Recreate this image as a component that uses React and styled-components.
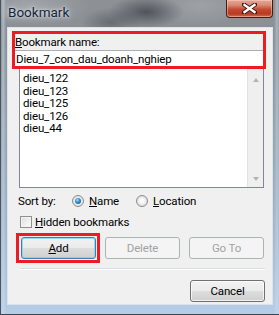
import React from 'react';
import styled, { createGlobalStyle } from 'styled-components';

const Global = createGlobalStyle`
  html, body { margin: 0; padding: 0; background: #868a8e; }
  body { font-family: Roboto, "Open Sans", sans-serif; }
  #root { width: 279px; height: 315px; }
`;

const Window = styled.div`
  width: 279px;
  height: 315px;
  box-sizing: border-box;
  display: flex;
  flex-direction: column;
  overflow: hidden;
  border-left: 1px solid #4a5560;
  border-bottom: 1px solid #3a4550;
  background:
    radial-gradient(ellipse 38px 16px at 145px 12px, rgba(40, 44, 50, 0.6), rgba(40, 44, 50, 0) 100%),
    radial-gradient(ellipse 30px 14px at 110px 22px, rgba(60, 64, 70, 0.45), rgba(60, 64, 70, 0) 100%),
    radial-gradient(ellipse 60px 20px at 30px 6px, rgba(200, 204, 208, 0.35), rgba(200, 204, 208, 0) 100%),
    radial-gradient(ellipse 50px 20px at 200px 6px, rgba(190, 194, 198, 0.35), rgba(190, 194, 198, 0) 100%),
    linear-gradient(90deg, rgba(255, 255, 255, 0) 0px, rgba(210, 225, 240, 0.5) 2px, rgba(255, 255, 255, 0) 5px, rgba(255, 255, 255, 0) 273px, rgba(210, 225, 240, 0.45) 276px, rgba(255, 255, 255, 0) 279px),
    linear-gradient(180deg, #8d9196 0px, #8a9096 40px, #9eb0c2 200px, #b6cde6 100%);
`;

const TitleBar = styled.div`
  height: 27px;
  display: flex;
  justify-content: space-between;
  align-items: flex-start;
  flex-shrink: 0;
`;

const Title = styled.span`
  padding: 4px 0 0 7px;
  font-size: 13.5px;
  line-height: 16px;
  color: #16253a;
  text-shadow: 0 0 6px rgba(235, 240, 245, 0.9), 0 0 3px rgba(235, 240, 245, 0.9);
`;

const CloseButton = styled.div`
  width: 47px;
  height: 18px;
  margin-right: 6px;
  box-sizing: border-box;
  border: 1px solid #4a1a12;
  border-top: none;
  border-radius: 0 0 4px 4px;
  background: linear-gradient(180deg, #e6a797 0%, #d98a74 30%, #c44a31 55%, #b83a22 80%, #d06a4a 100%);
  box-shadow: inset 0 0 0 1px rgba(255, 220, 210, 0.45);
  display: flex;
  align-items: center;
  justify-content: center;
`;

const Client = styled.div`
  margin: 0 6px;
  height: 278px;
  box-sizing: border-box;
  border: 1px solid #dde3ea;
  background: #f0f0f0;
  display: flex;
  flex-direction: column;
  font-size: 11.5px;
  letter-spacing: -0.15px;
  color: #000;
  flex-shrink: 0;
`;

const NameGroup = styled.div`
  margin: 3px 0 0 4px;
  width: 254px;
  height: 38px;
  box-sizing: border-box;
  border: 3px solid #ec1c24;
  display: flex;
  flex-direction: column;
`;

const FieldLabel = styled.div`
  height: 16px;
  line-height: 16px;
  white-space: nowrap;
`;

const TextField = styled.input`
  height: 16px;
  width: 100%;
  box-sizing: border-box;
  margin: 0;
  padding: 0 1px;
  border: none;
  border-top: 1px solid #abadb3;
  background: #fff;
  font: inherit;
  letter-spacing: inherit;
  line-height: 15px;
  color: #000;
  outline: none;
`;

const ListBox = styled.div`
  margin-left: 11px;
  width: 245px;
  height: 119px;
  box-sizing: border-box;
  border: 1px solid #828790;
  border-top: none;
  background: #fff;
  display: flex;
  flex-shrink: 0;
`;

const Items = styled.div`
  flex: 1;
  padding: 3px 0 0 3px;
  line-height: 12.5px;
`;

const Item = styled.div`
  white-space: nowrap;
  height: 12.5px;
`;

const ScrollBar = styled.div`
  width: 16px;
  box-sizing: border-box;
  border-left: 1px solid #e2e2e2;
  background: #efefef;
  display: flex;
  flex-direction: column;
  justify-content: space-between;
  align-items: center;
  padding: 9px 0 6px;
`;

const Arrow = styled.div`
  width: 0;
  height: 0;
  border-left: 3.5px solid transparent;
  border-right: 3.5px solid transparent;
  ${(p) => (p.$up ? 'border-bottom: 4px solid #b4b4b4;' : 'border-top: 4px solid #b4b4b4;')}
`;

const SortRow = styled.div`
  margin: 5px 0 0 10px;
  height: 16px;
  display: flex;
  align-items: center;
`;

const SortLabel = styled.span`
  width: 54px;
`;

const RadioOption = styled.label`
  display: flex;
  align-items: center;
  gap: 5px;
  width: ${(p) => p.$w || 'auto'};
`;

const RadioCircle = styled.span`
  width: 12px;
  height: 12px;
  box-sizing: border-box;
  border-radius: 50%;
  border: 1px solid #8a8c8e;
  background: radial-gradient(circle at 50% 50%, #ffffff 20%, #e6e6e6 60%, #cfcfcf 100%);
  display: flex;
  align-items: center;
  justify-content: center;
  &::after {
    content: '';
    display: ${(p) => (p.$checked ? 'block' : 'none')};
    width: 6px;
    height: 6px;
    border-radius: 50%;
    background: radial-gradient(circle at 40% 35%, #9be0fb 0%, #2a8ccc 45%, #0b4a80 100%);
  }
`;

const Ul = styled.u`
  text-decoration: underline;
  text-underline-offset: 1px;
`;

const CheckRow = styled.label`
  margin: 5px 0 0 12px;
  height: 16px;
  display: flex;
  align-items: center;
  gap: 3px;
`;

const CheckBox = styled.span`
  width: 12px;
  height: 12px;
  box-sizing: border-box;
  border: 1px solid #8e8f8f;
  background: linear-gradient(135deg, #dcdcdc 0%, #f4f4f4 70%, #fbfbfb 100%);
  box-shadow: inset 0 0 0 1px #f4f4f4;
`;

const ButtonRow = styled.div`
  margin: 7px 0 0 13px;
  display: flex;
  gap: 9px;
`;

const Button = styled.button`
  position: relative;
  width: 75px;
  height: 22px;
  margin: 0;
  padding: 0;
  box-sizing: border-box;
  border-radius: 3px;
  font-family: inherit;
  font-size: 11.5px;
  letter-spacing: inherit;
  border: 1px solid ${(p) => (p.disabled ? '#adb2b5' : p.$default ? '#3c7fb1' : '#707070')};
  color: ${(p) => (p.disabled ? '#a3a3a3' : '#000')};
  background: ${(p) =>
    p.disabled
      ? '#f4f4f4'
      : 'linear-gradient(180deg, #f2f2f2 0%, #ebebeb 48%, #dddddd 52%, #cfcfcf 100%)'};
  box-shadow: ${(p) =>
    p.disabled
      ? 'none'
      : p.$default
      ? 'inset 0 0 0 1px rgba(120, 210, 245, 0.75)'
      : 'inset 0 0 0 1px rgba(255, 255, 255, 0.7)'};
  ${(p) =>
    p.$highlight &&
    `&::after {
      content: '';
      position: absolute;
      left: -6px;
      top: -5px;
      right: -5px;
      bottom: -5px;
      border: 3px solid #ec1c24;
    }`}
`;

const Separator = styled.div`
  margin: 9px 0 0 12px;
  width: 245px;
  border-top: 1px solid #d5dfe5;
  border-bottom: 1px solid #ffffff;
`;

const CancelRow = styled.div`
  margin: 10px 7px 0 0;
  display: flex;
  justify-content: flex-end;
`;

const items = ['dieu_122', 'dieu_123', 'dieu_125', 'dieu_126', 'dieu_44'];

export default function App() {
  return (
    <>
      <Global />
      <Window>
        <TitleBar>
          <Title>Bookmark</Title>
          <CloseButton>
            <svg width="15" height="11" viewBox="0 0 15 11">
              <path d="M2 1.5 L13 9.5 M13 1.5 L2 9.5" stroke="#3b1a14" strokeWidth="4.2" strokeLinecap="square" />
              <path d="M2.5 2 L12.5 9 M12.5 2 L2.5 9" stroke="#ffffff" strokeWidth="2.4" strokeLinecap="square" />
            </svg>
          </CloseButton>
        </TitleBar>
        <Client>
          <NameGroup>
            <FieldLabel>
              <Ul>B</Ul>ookmark name:
            </FieldLabel>
            <TextField readOnly value="Dieu_7_con_dau_doanh_nghiep" />
          </NameGroup>
          <ListBox>
            <Items>
              {items.map((t) => (
                <Item key={t}>{t}</Item>
              ))}
            </Items>
            <ScrollBar>
              <Arrow $up />
              <Arrow />
            </ScrollBar>
          </ListBox>
          <SortRow>
            <SortLabel>Sort by:</SortLabel>
            <RadioOption $w="64px">
              <RadioCircle $checked />
              <span>
                <Ul>N</Ul>ame
              </span>
            </RadioOption>
            <RadioOption>
              <RadioCircle />
              <span>
                <Ul>L</Ul>ocation
              </span>
            </RadioOption>
          </SortRow>
          <CheckRow>
            <CheckBox />
            <span>
              <Ul>H</Ul>idden bookmarks
            </span>
          </CheckRow>
          <ButtonRow>
            <Button $default $highlight>
              <Ul>A</Ul>dd
            </Button>
            <Button disabled>Delete</Button>
            <Button disabled>Go To</Button>
          </ButtonRow>
          <Separator />
          <CancelRow>
            <Button>Cancel</Button>
          </CancelRow>
        </Client>
      </Window>
    </>
  );
}
